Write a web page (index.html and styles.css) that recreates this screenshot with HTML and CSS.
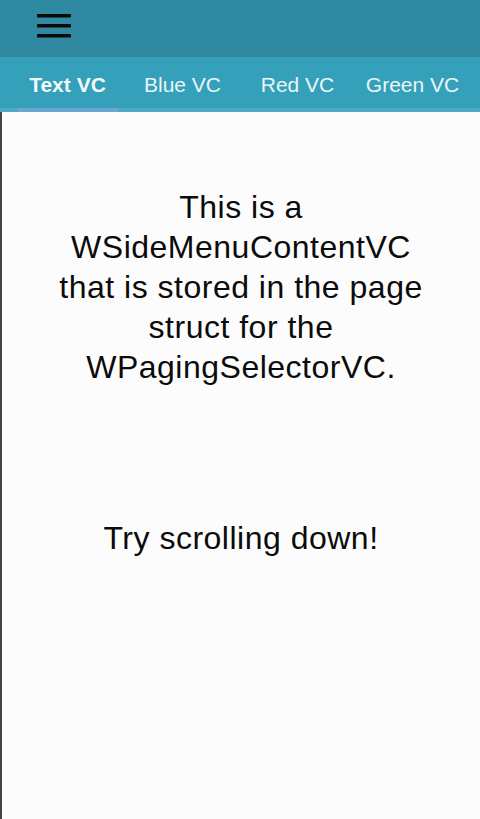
FILE: index.html
```html
<!DOCTYPE html>
<html lang="en">
<head>
<meta charset="utf-8">
<link rel="stylesheet" href="styles.css">
<title>WPagingSelectorVC</title>
</head>
<body>
<div class="app">
  <header class="navbar">
    <button class="menu-btn" aria-label="Menu">
      <svg width="34" height="24" viewBox="0 0 34 24">
        <rect x="0" y="0" width="34" height="3.4" rx="1" fill="#0a0a0a"/>
        <rect x="0" y="10" width="34" height="3.4" rx="1" fill="#0a0a0a"/>
        <rect x="0" y="20" width="34" height="3.4" rx="1" fill="#0a0a0a"/>
      </svg>
    </button>
  </header>
  <nav class="tabs">
    <div class="tab-row">
      <span class="tab active">Text VC</span>
      <span class="tab">Blue VC</span>
      <span class="tab">Red VC</span>
      <span class="tab">Green VC</span>
    </div>
    <div class="indicator-track"><div class="indicator"></div></div>
  </nav>
  <main class="content">
    <p class="msg">This is a<br>WSideMenuContentVC<br>that is stored in the page<br>struct for the<br>WPagingSelectorVC.</p>
    <p class="msg hint">Try scrolling down!</p>
  </main>
</div>
</body>
</html>
```
FILE: styles.css
```css
* { box-sizing: border-box; }
html, body { margin: 0; padding: 0; height: 100%; }
body {
  font-family: "Liberation Sans", Arial, sans-serif;
  background: #fdfcfd;
}
.app {
  display: flex;
  flex-direction: column;
  height: 819px;
}
.navbar {
  height: 57px;
  background: #2f89a0;
  display: flex;
  align-items: flex-start;
  padding: 14px 0 0 37px;
}
.menu-btn {
  border: 0;
  background: none;
  padding: 0;
  display: block;
  line-height: 0;
}
.tabs {
  background: #35a0b9;
  height: 55px;
  display: flex;
  flex-direction: column;
}
.tab-row {
  display: flex;
  padding: 0 10px;
  height: 51px;
  align-items: center;
}
.tab {
  width: 115px;
  text-align: center;
  color: #eaf5f8;
  font-size: 21px;
  padding-top: 5px;
}
.tab.active { font-weight: bold; color: #f2f9fb; }
.indicator-track {
  height: 4px;
  background: #4fa9c3;
  padding-left: 18px;
}
.indicator {
  width: 100px;
  height: 4px;
  background: #6aa6cf;
}
.content {
  flex: 1;
  border-left: 2px solid #444;
  padding-top: 75px;
  text-align: center;
}
.msg {
  margin: 0;
  font-size: 32px;
  line-height: 40px;
  letter-spacing: 0.5px;
  color: #0b0b0b;
}
.hint { margin-top: 131px; }
```
